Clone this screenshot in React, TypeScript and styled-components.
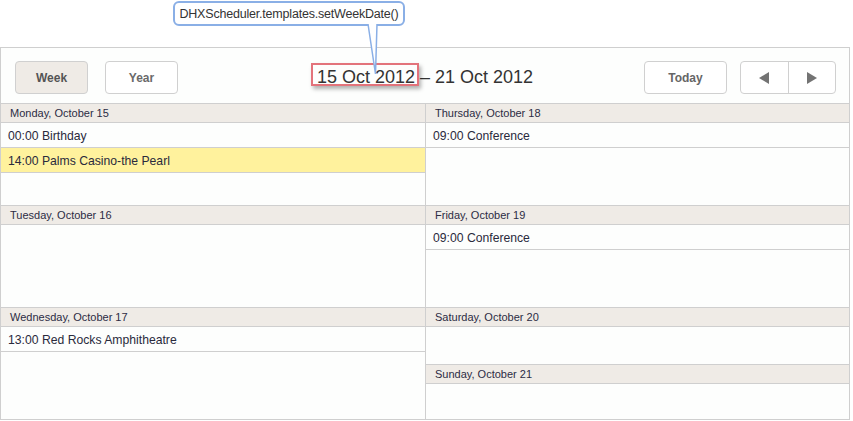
import React, { FC } from 'react';
import styled, { createGlobalStyle, css } from 'styled-components';

interface DayEvent {
  time: string;
  title: string;
  highlight?: boolean;
}

interface DayData {
  label: string;
  events: DayEvent[];
  size?: number;
}

const leftDays: DayData[] = [
  {
    label: 'Monday, October 15',
    size: 102,
    events: [
      { time: '00:00', title: 'Birthday' },
      { time: '14:00', title: 'Palms Casino-the Pearl', highlight: true },
    ],
  },
  { label: 'Tuesday, October 16', size: 102, events: [] },
  {
    label: 'Wednesday, October 17',
    events: [{ time: '13:00', title: 'Red Rocks Amphitheatre' }],
  },
];

const rightDays: DayData[] = [
  {
    label: 'Thursday, October 18',
    size: 102,
    events: [{ time: '09:00', title: 'Conference' }],
  },
  {
    label: 'Friday, October 19',
    size: 102,
    events: [{ time: '09:00', title: 'Conference' }],
  },
  { label: 'Saturday, October 20', size: 57, events: [] },
  { label: 'Sunday, October 21', events: [] },
];

const GlobalStyle = createGlobalStyle`
  html, body {
    margin: 0;
    padding: 0;
    background: #ffffff;
  }
  body {
    font-family: "Liberation Sans", Arial, sans-serif;
  }
`;

const DaySection: FC<{ day: DayData }> = ({ day }) => (
  <Day $size={day.size}>
    <DayHeader>{day.label}</DayHeader>
    {day.events.map((ev, i) => (
      <EventRow key={i} $highlight={ev.highlight}>
        {ev.time} {ev.title}
      </EventRow>
    ))}
  </Day>
);

const App: FC<{}> = () => {
  return (
    <>
      <GlobalStyle />
      <Page>
        <AnnotationRow>
          <Callout>
            DHXScheduler.templates.setWeekDate()
            <CalloutTail width="20" height="56" viewBox="0 0 20 56">
              <path d="M1 0 L8.5 50 L10 0 Z" fill="#ffffff" />
              <path d="M1 0 L8.5 50 L10 0" fill="none" stroke="#8aafe6" strokeWidth="1.5" />
            </CalloutTail>
          </Callout>
        </AnnotationRow>

        <Scheduler>
          <NavBar>
            <ModeTabs>
              <TabButton $active>Week</TabButton>
              <TabButton>Year</TabButton>
            </ModeTabs>
            <DateTitle>
              <Highlight>15 Oct 2012</Highlight> – 21 Oct 2012
            </DateTitle>
            <NavRight>
              <TodayButton>Today</TodayButton>
              <ArrowGroup>
                <ArrowButton aria-label="previous">
                  <svg width="10" height="12" viewBox="0 0 10 12">
                    <polygon points="10,0 10,12 0,6" fill="#737373" />
                  </svg>
                </ArrowButton>
                <ArrowButton aria-label="next">
                  <svg width="10" height="12" viewBox="0 0 10 12">
                    <polygon points="0,0 0,12 10,6" fill="#737373" />
                  </svg>
                </ArrowButton>
              </ArrowGroup>
            </NavRight>
          </NavBar>

          <DayGrid>
            <Column $left>
              {leftDays.map(d => (
                <DaySection key={d.label} day={d} />
              ))}
            </Column>
            <Column>
              {rightDays.map(d => (
                <DaySection key={d.label} day={d} />
              ))}
            </Column>
          </DayGrid>
        </Scheduler>
      </Page>
    </>
  );
};

const Page = styled.div`
  width: 853px;
  height: 421px;
  display: flex;
  flex-direction: column;
  background: #ffffff;
`;

const AnnotationRow = styled.div`
  height: 47px;
  padding-top: 1px;
  box-sizing: border-box;
  position: relative;
  z-index: 2;
`;

const Callout = styled.div`
  position: relative;
  margin-left: 173px;
  width: 232px;
  height: 25px;
  box-sizing: border-box;
  border: 2px solid #8aafe6;
  border-radius: 6px;
  background: #ffffff;
  display: flex;
  align-items: center;
  justify-content: center;
  font-size: 12.5px;
  letter-spacing: -0.2px;
  color: #333333;
`;

const CalloutTail = styled.svg`
  position: absolute;
  left: 192px;
  top: 21px;
  overflow: visible;
`;

const Scheduler = styled.div`
  width: 850px;
  height: 373px;
  box-sizing: border-box;
  border: 1px solid #cfcfcf;
  display: flex;
  flex-direction: column;
  background: #fdfefd;
`;

const NavBar = styled.div`
  height: 55px;
  box-sizing: border-box;
  padding-top: 13px;
  display: grid;
  grid-template-columns: 1fr auto 1fr;
  align-items: start;
`;

const ModeTabs = styled.div`
  display: flex;
  gap: 17px;
  margin-left: 14px;
`;

const buttonBase = css`
  height: 33px;
  box-sizing: border-box;
  border: 1px solid #d0d0d0;
  border-radius: 4px;
  font-family: "Liberation Sans", Arial, sans-serif;
  font-weight: bold;
  font-size: 12px;
  color: #636363;
  display: flex;
  align-items: center;
  justify-content: center;
  padding: 0;
`;

const TabButton = styled.button<{ $active?: boolean }>`
  ${buttonBase};
  width: 73px;
  background: ${p => (p.$active ? '#efebe6' : '#ffffff')};
  color: ${p => (p.$active ? '#545454' : '#6a6a6a')};
`;

const DateTitle = styled.div`
  margin-top: 5px;
  font-size: 18px;
  line-height: 22px;
  color: #333333;
  white-space: nowrap;
`;

const Highlight = styled.span`
  position: relative;

  &::after {
    content: '';
    position: absolute;
    left: -6px;
    right: -4px;
    top: -4px;
    bottom: 1px;
    border: 2px solid #e3737b;
    box-shadow: 2px 3px 4px rgba(0, 0, 0, 0.3);
  }
`;

const NavRight = styled.div`
  justify-self: end;
  display: flex;
  gap: 13px;
  margin-right: 13px;
`;

const TodayButton = styled.button`
  ${buttonBase};
  width: 83px;
  background: #ffffff;
  color: #666666;
`;

const ArrowGroup = styled.div`
  display: flex;
  width: 96px;
  height: 33px;
  box-sizing: border-box;
  border: 1px solid #d0d0d0;
  border-radius: 4px;
  background: #ffffff;
  overflow: hidden;
`;

const ArrowButton = styled.button`
  flex: 1;
  border: none;
  background: transparent;
  display: flex;
  align-items: center;
  justify-content: center;
  padding: 0;

  & + & {
    border-left: 1px solid #d0d0d0;
  }
`;

const DayGrid = styled.div`
  flex: 1;
  display: grid;
  grid-template-columns: 425px 1fr;
  min-height: 0;
`;

const Column = styled.div<{ $left?: boolean }>`
  display: flex;
  flex-direction: column;
  border-right: ${p => (p.$left ? '1px solid #cfcfcf' : 'none')};
`;

const Day = styled.div<{ $size?: number }>`
  display: flex;
  flex-direction: column;
  ${p => (p.$size ? `height: ${p.$size}px; flex: none;` : 'flex: 1;')}
`;

const DayHeader = styled.div`
  height: 20px;
  box-sizing: border-box;
  border-top: 1px solid #cfcfcf;
  border-bottom: 1px solid #cfcfcf;
  background: #efebe6;
  padding-left: 9px;
  font-size: 11px;
  line-height: 18px;
  color: #2c2c44;
  white-space: nowrap;
`;

const EventRow = styled.div<{ $highlight?: boolean }>`
  height: 25px;
  box-sizing: border-box;
  border-bottom: 1px solid #cfcfcf;
  background: ${p => (p.$highlight ? '#fff29d' : 'transparent')};
  padding-left: 7px;
  padding-top: 1px;
  font-size: 12.2px;
  line-height: 24px;
  color: #2a2a3c;
  white-space: nowrap;
`;

export default App;
